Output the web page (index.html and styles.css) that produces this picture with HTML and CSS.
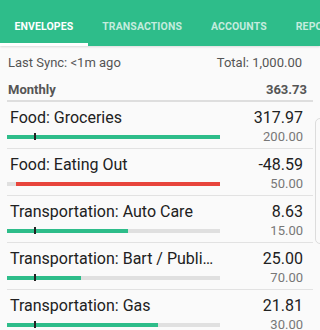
FILE: index.html
```html
<!DOCTYPE html>
<html>
<head>
<meta charset="utf-8">
<link rel="stylesheet" href="styles.css">
</head>
<body>
<div class="app">
  <div class="tabs">
    <div class="tab active">ENVELOPES</div>
    <div class="tab">TRANSACTIONS</div>
    <div class="tab">ACCOUNTS</div>
    <div class="tab">REPORTS</div>
  </div>
  <div class="content">
    <div class="sync">
      <span>Last Sync: &lt;1m ago</span>
      <span>Total: 1,000.00</span>
    </div>
    <div class="group">
      <span>Monthly</span>
      <span>363.73</span>
    </div>
    <div class="list">
      <div class="row">
        <div class="left">
          <div class="title">Food: Groceries</div>
          <div class="bar"><div class="fill" style="width:100%"></div><div class="tick"></div></div>
        </div>
        <div class="right">
          <div class="amount">317.97</div>
          <div class="budget">200.00</div>
        </div>
      </div>
      <div class="row">
        <div class="left">
          <div class="title">Food: Eating Out</div>
          <div class="bar"><div class="fill neg" style="width:95.8%"></div></div>
        </div>
        <div class="right">
          <div class="amount">-48.59</div>
          <div class="budget">50.00</div>
        </div>
      </div>
      <div class="row">
        <div class="left">
          <div class="title">Transportation: Auto Care</div>
          <div class="bar"><div class="fill" style="width:56.8%"></div><div class="tick"></div></div>
        </div>
        <div class="right">
          <div class="amount">8.63</div>
          <div class="budget">15.00</div>
        </div>
      </div>
      <div class="row">
        <div class="left">
          <div class="title">Transportation: Bart / Public Transit</div>
          <div class="bar"><div class="fill" style="width:34.7%"></div><div class="tick"></div></div>
        </div>
        <div class="right">
          <div class="amount">25.00</div>
          <div class="budget">70.00</div>
        </div>
      </div>
      <div class="row">
        <div class="left">
          <div class="title">Transportation: Gas</div>
          <div class="bar"><div class="fill" style="width:71%"></div><div class="tick"></div></div>
        </div>
        <div class="right">
          <div class="amount">21.81</div>
          <div class="budget">30.00</div>
        </div>
      </div>
    </div>
  </div>
  <div class="edge"></div>
</div>
</body>
</html>
```
FILE: styles.css
```css
html, body {
  margin: 0;
  padding: 0;
}
body {
  font-family: Roboto, "Liberation Sans", sans-serif;
  background: #fafafa;
  width: 320px;
  height: 330px;
  overflow: hidden;
}
.app {
  position: relative;
  width: 320px;
  height: 330px;
  overflow: hidden;
}
.tabs {
  display: flex;
  height: 46px;
  background: #2ebd8a;
  overflow: hidden;
  white-space: nowrap;
  box-shadow: 0 1px 2px rgba(0,0,0,0.12);
}
.tab {
  flex-shrink: 0;
  padding: 6px 14.5px 0;
  height: 46px;
  box-sizing: border-box;
  display: flex;
  align-items: center;
  font-size: 10.5px;
  font-weight: 700;
  color: rgba(255,255,255,0.72);
  letter-spacing: 0.1px;
}
.tab.active {
  color: #fff;
  border-bottom: 3px solid #fff;
  padding-top: 9px;
}
.content {
  padding: 0 7px;
}
.sync {
  display: flex;
  justify-content: space-between;
  height: 33px;
  align-items: center;
  font-size: 13px;
  color: #555;
  padding: 0 11px 0 0;
}
.sync span:first-child { padding-left: 1px; }
.group {
  display: flex;
  justify-content: space-between;
  align-items: center;
  height: 21px;
  font-size: 13px;
  font-weight: 700;
  color: #555;
  padding: 0 6px 0 1px;
  border-bottom: 2px solid #dedede;
}
.row {
  display: flex;
  height: 46px;
  border-bottom: 1px solid #e2e2e2;
}
.left {
  width: 213px;
  flex-shrink: 0;
}
.title {
  padding: 6px 0 0 3px;
  font-size: 16px;
  line-height: 20px;
  color: #212121;
  white-space: nowrap;
  overflow: hidden;
  text-overflow: ellipsis;
}
.bar {
  position: relative;
  margin-top: 7px;
  height: 4px;
  background: #e0e0e0;
}
.fill {
  height: 4px;
  background: #2ebd8a;
}
.fill.neg {
  background: #e8453c;
  margin-left: auto;
}
.tick {
  position: absolute;
  left: 27px;
  top: -2px;
  width: 2px;
  height: 7px;
  background: #222;
}
.right {
  flex: 1;
  text-align: right;
  padding-right: 10px;
}
.amount {
  padding-top: 6px;
  font-size: 16px;
  line-height: 20px;
  color: #212121;
}
.budget {
  font-size: 13px;
  line-height: 16px;
  margin-top: 1px;
  color: #777;
}
.edge {
  position: absolute;
  left: 315px;
  top: 118px;
  width: 10px;
  height: 126px;
  border: 1px solid #dcdcdc;
  border-radius: 5px;
  box-sizing: border-box;
}
```
